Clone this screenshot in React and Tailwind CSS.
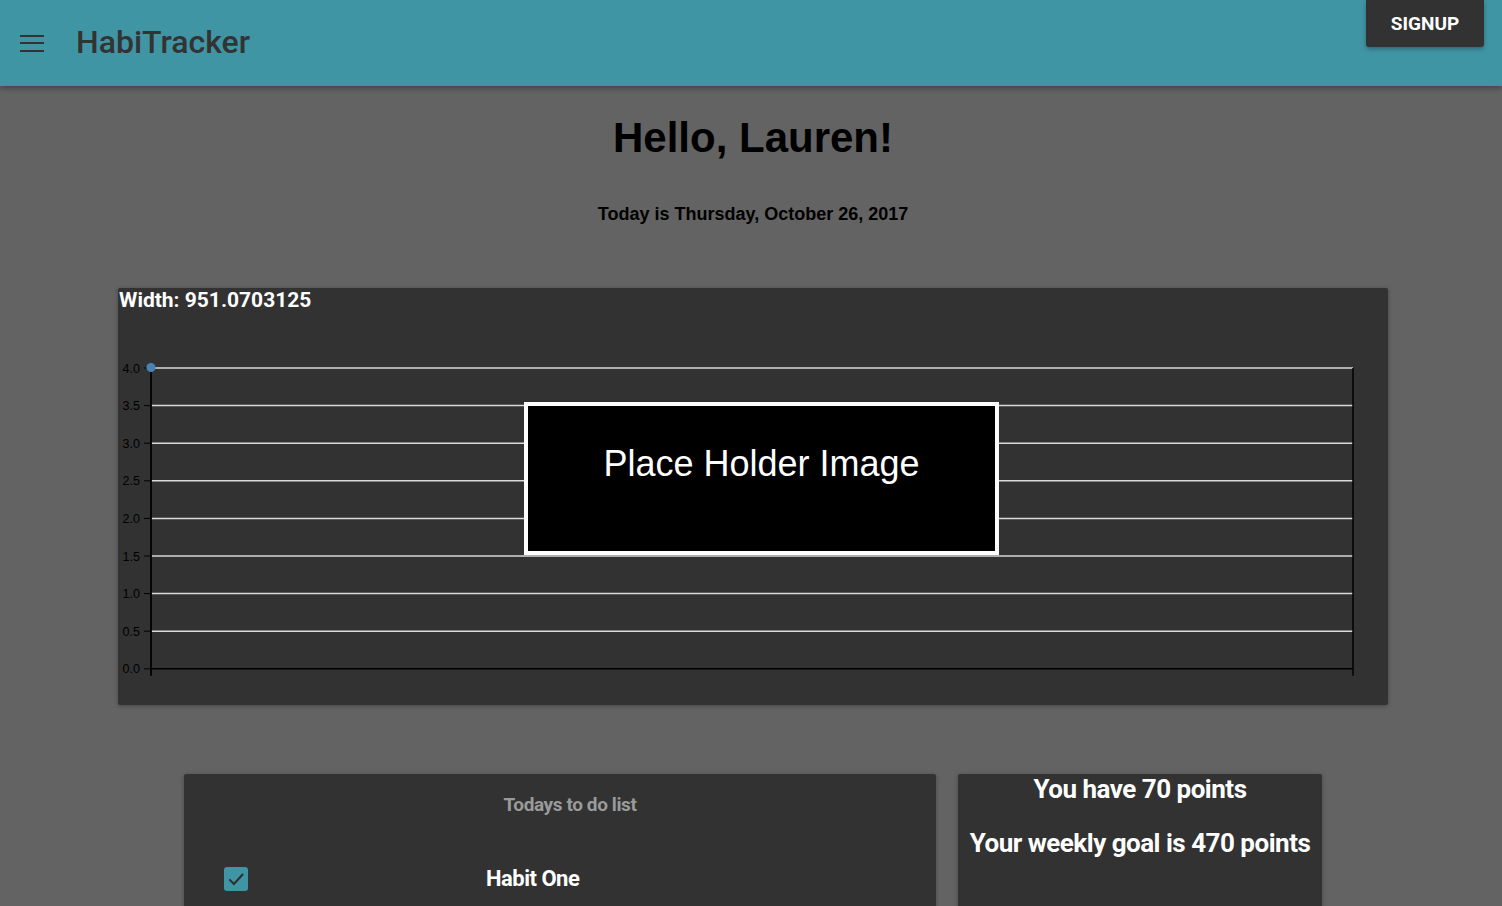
import React from 'react';

const ticks = [4.0, 3.5, 3.0, 2.5, 2.0, 1.5, 1.0, 0.5, 0.0];

// chart geometry, in card coordinates below the width label
const top = 56;
const step = 37.6;
const left = 33;
const right = 1235;

const Chart = () => (
  <svg width="1270" height="393" className="block" style={{ fontFamily: '"Liberation Sans", Arial, sans-serif' }}>
    {ticks.map((t, i) => {
      const y = top + i * step;
      return (
        <g key={t}>
          {i < ticks.length - 1 && (
            <line x1={left} x2={right} y1={y} y2={y} stroke="#d9d9d9" strokeWidth="1.5" />
          )}
          <line x1={left - 7} x2={left} y1={y} y2={y} stroke="#000" strokeWidth="1" />
          <text x={left - 11} y={y + 4.5} fontSize="12.5" fill="#000" textAnchor="end">
            {t.toFixed(1)}
          </text>
        </g>
      );
    })}
    <line x1={left} x2={left} y1={top} y2={top + 8 * step + 7} stroke="#000" strokeWidth="1.8" />
    <line x1={right} x2={right} y1={top} y2={top + 8 * step + 7} stroke="#000" strokeWidth="1.5" />
    <line x1={left} x2={right} y1={top + 8 * step} y2={top + 8 * step} stroke="#000" strokeWidth="1.5" />
    <circle cx={left} cy={top - 0.5} r="4.5" fill="#4682b4" />
  </svg>
);

const App = () => {
  return (
    <div className="min-h-screen bg-[#636363] overflow-hidden" style={{ fontFamily: 'Roboto, "Liberation Sans", sans-serif' }}>
      <header className="relative h-[86px] bg-[#4095a5] shadow-[0_2px_6px_rgba(0,0,0,0.35)] flex items-center">
        <button className="ml-[20px] flex flex-col gap-[5.5px] w-[24px]">
          <span className="block h-[2px] w-[24px] bg-[#333]" />
          <span className="block h-[2px] w-[24px] bg-[#333]" />
          <span className="block h-[2px] w-[24px] bg-[#333]" />
        </button>
        <h1 className="ml-[32px] text-[32px] font-medium text-[#333] leading-none -mt-[3px]">HabiTracker</h1>
        <button className="absolute right-[18px] top-0 h-[47px] w-[118px] bg-[#323232] rounded-b-[3px] text-white font-bold text-[19px] shadow-[0_2px_4px_rgba(0,0,0,0.3)] pt-[1px]">
          SIGNUP
        </button>
      </header>

      <main className="flex flex-col items-center pl-[4px]">
        <h2
          className="mt-[26px] text-[42px] font-bold text-black leading-[52px]"
          style={{ fontFamily: '"Liberation Sans", Arial, sans-serif' }}
        >
          Hello, Lauren!
        </h2>
        <p
          className="mt-[40px] text-[18px] font-bold text-black leading-[20px]"
          style={{ fontFamily: '"Liberation Sans", Arial, sans-serif' }}
        >
          Today is Thursday, October 26, 2017
        </p>

        <section className="relative mt-[64px] w-[1270px] h-[417px] bg-[#323232] rounded-[2px] shadow-[0_1px_4px_rgba(0,0,0,0.3)]">
          <div className="pl-[1px] pt-[1px] text-white font-bold text-[21px] leading-[23px]">Width: 951.0703125</div>
          <Chart />
          <div className="absolute left-[406px] top-[114px] w-[475px] h-[153px] bg-black border-4 border-white flex justify-center">
            <span
              className="pt-[37px] text-white text-[36px] leading-[41px]"
              style={{ fontFamily: '"Liberation Sans", Arial, sans-serif' }}
            >
              Place Holder Image
            </span>
          </div>
        </section>

        <div className="mt-[69px] flex gap-[22px]">
          <div className="w-[752px] h-[200px] bg-[#323232] rounded-[2px] shadow-[0_1px_4px_rgba(0,0,0,0.3)]">
            <div className="pl-[20px] pt-[20px] text-center text-[19px] font-bold text-[#9a9a9a] leading-[22px] tracking-[-0.4px]">Todays to do list</div>
            <div className="mt-[51px] flex items-center">
              <div className="ml-[40px] w-[24px] h-[24px] rounded-[3px] bg-[#4095a5] flex items-center justify-center">
                <svg width="20" height="20" viewBox="0 0 24 24" fill="none" stroke="#2e2e2e" strokeWidth="2.4">
                  <path d="M4 12.5l5.5 5.5L20.5 6" />
                </svg>
              </div>
              <div className="ml-[238px] text-white font-bold text-[22px] tracking-[-0.5px] leading-[24px]">Habit One</div>
            </div>
          </div>
          <div className="w-[364px] h-[200px] bg-[#323232] rounded-[2px] shadow-[0_1px_4px_rgba(0,0,0,0.3)] text-center text-white font-bold text-[26px] tracking-[-0.5px]">
            <div className="pt-[1px] leading-[28px]">You have 70 points</div>
            <div className="mt-[26px] leading-[28px]">Your weekly goal is 470 points</div>
          </div>
        </div>
      </main>
    </div>
  );
};

export default App;
